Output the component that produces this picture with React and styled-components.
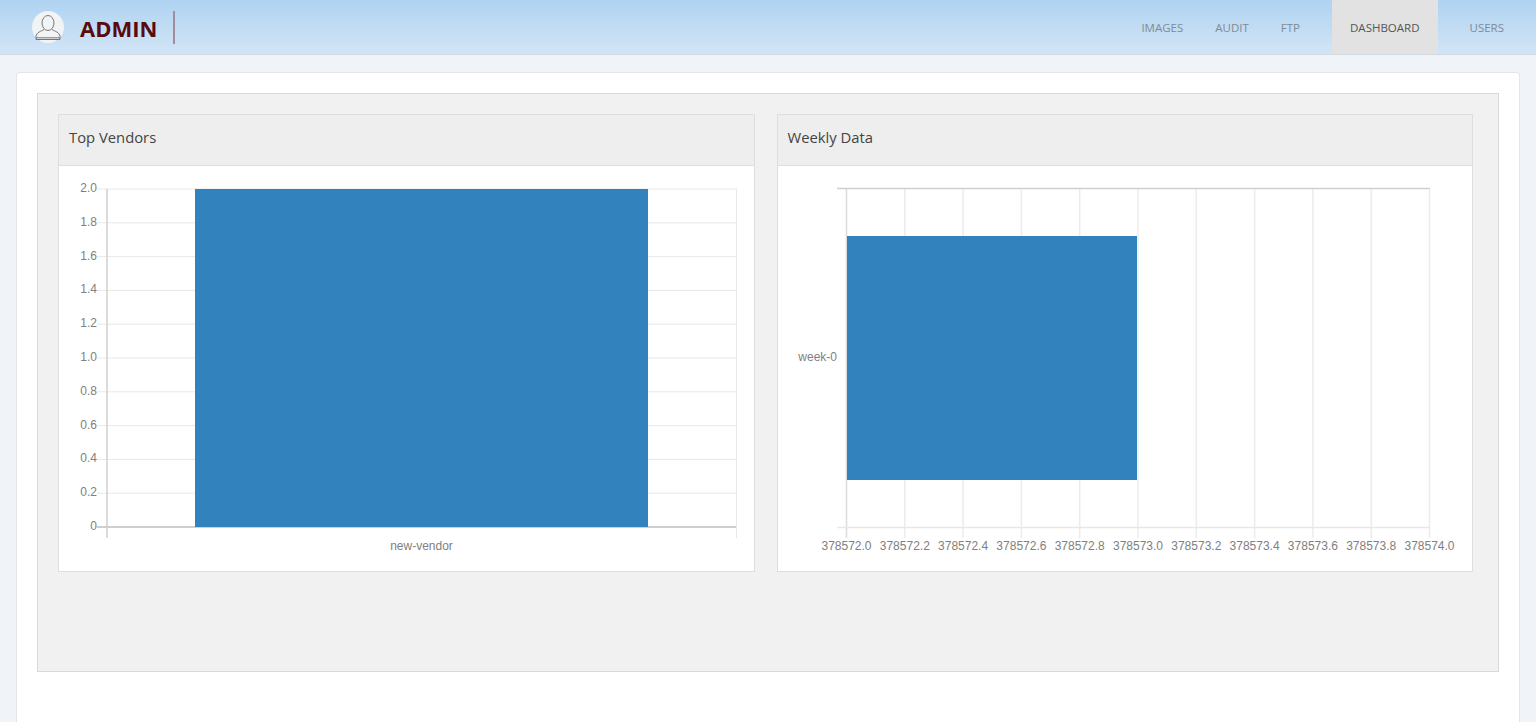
import React from 'react';
import styled, { createGlobalStyle } from 'styled-components';

const navItems = [
  { label: 'IMAGES', left: 16, right: 16 },
  { label: 'AUDIT', left: 16, right: 16 },
  { label: 'FTP', left: 16, right: 32 },
  { label: 'DASHBOARD', left: 18, right: 18, isActive: true },
  { label: 'USERS', left: 32, right: 32 },
];

const barColor = '#3182bd';
const gridColor = '#e8e8e8';
const axisColor = '#cfcfcf';

const vendorTicks = ['2.0', '1.8', '1.6', '1.4', '1.2', '1.0', '0.8', '0.6', '0.4', '0.2', '0'];
const weeklyTicks = ['378572.0', '378572.2', '378572.4', '378572.6', '378572.8', '378573.0', '378573.2', '378573.4', '378573.6', '378573.8', '378574.0'];

const GlobalStyle = createGlobalStyle`
  html, body {
    margin: 0;
    height: 100%;
    overflow: hidden;
    background: #f0f4f8;
    font-family: "Open Sans", "Liberation Sans", sans-serif;
  }
`;

const Page = styled.div`
  height: 722px;
  display: flex;
  flex-direction: column;
`;

const Header = styled.header`
  height: 54px;
  flex: none;
  display: flex;
  justify-content: space-between;
  background: linear-gradient(to bottom, #afd3f1, #d2e5f6);
  border-bottom: 1px solid #d0dae2;
`;

const Brand = styled.div`
  display: flex;
  align-items: center;
  padding-left: 32px;
`;

const Avatar = styled.div`
  width: 32px;
  height: 32px;
  border-radius: 50%;
  background: #f1f3f4;
  display: flex;
  align-items: center;
  justify-content: center;
`;

const BrandName = styled.div`
  margin-left: 16px;
  padding-right: 16px;
  height: 33px;
  line-height: 35px;
  border-right: 2px solid #a08c9a;
  color: #5a0a0e;
  font-size: 22px;
  font-weight: 700;
`;

const Nav = styled.nav`
  display: flex;
`;

const NavItem = styled.a`
  display: flex;
  align-items: center;
  height: 54px;
  padding: 0 ${(p) => p.$right}px 0 ${(p) => p.$left}px;
  font-size: 11.5px;
  color: ${(p) => (p.$isActive ? '#555' : '#7f8b96')};
  background: ${(p) => (p.$isActive ? '#e2e2e2' : 'transparent')};
`;

const Main = styled.main`
  flex: 1;
  padding: 17px 16px 0 16px;
  display: flex;
`;

const Card = styled.div`
  flex: 1;
  background: #fff;
  border: 1px solid #e3e6e9;
  border-bottom: none;
  border-radius: 4px 4px 0 0;
  padding: 20px 20px 0;
`;

const Well = styled.div`
  height: 537px;
  background: #f1f1f1;
  border: 1px solid #d9d9d9;
  padding: 20px;
  display: flex;
  gap: 22px;
`;

const Panel = styled.section`
  width: 696.5px;
  height: 458px;
  box-sizing: border-box;
  background: #fff;
  border: 1px solid #dedede;
`;

const PanelTitle = styled.div`
  height: 51px;
  box-sizing: border-box;
  padding-left: 10px;
  line-height: 44px;
  background: #eee;
  border-bottom: 1px solid #dedede;
  font-size: 14.8px;
  color: #444;
`;

const ChartSvg = styled.svg`
  display: block;
  width: 694.5px;
  height: 405px;
`;

const TickLabel = styled.text`
  font-family: "Liberation Sans", Arial, sans-serif;
  font-size: 12px;
  fill: #808080;
`;

const UserIcon = () => (
  <svg width="26" height="27" viewBox="0 0 26 27" fill="none" stroke="#777" strokeWidth="1">
    <ellipse cx="13" cy="9" rx="6" ry="7.5" />
    <path d="M9 15.5C6 17.5 1.5 18 1 22.5V25.5H25V22.5C24.5 18 20 17.5 17 15.5" />
    <path d="M1 23.8H25" />
  </svg>
);

const TopVendorsChart = () => (
  <ChartSvg viewBox="59 166 694.5 405">
    {vendorTicks.map((tick, i) => {
      const y = 189 + i * 33.8;
      return (
        <g key={tick}>
          <line x1="97" x2="737" y1={y} y2={y} stroke={i === 10 ? axisColor : gridColor} strokeWidth={i === 10 ? 2 : 1} />
          <TickLabel x="97" y={y + 3} textAnchor="end">{tick}</TickLabel>
        </g>
      );
    })}
    <line x1="107" x2="107" y1="189" y2="538" stroke={axisColor} strokeWidth="1.5" />
    <line x1="736.5" x2="736.5" y1="189" y2="538" stroke={gridColor} />
    <rect x="195" y="189" width="453" height="338" fill={barColor} />
    <TickLabel x="421.5" y="550" textAnchor="middle">new-vendor</TickLabel>
  </ChartSvg>
);

const WeeklyDataChart = () => (
  <ChartSvg viewBox="778 166 694.5 405">
    {weeklyTicks.map((tick, i) => {
      const x = 846.5 + i * 58.3;
      return (
        <g key={tick}>
          <line x1={x} x2={x} y1="189" y2="538" stroke={i === 0 ? '#dcdcdc' : '#ececec'} strokeWidth="1.5" />
          <TickLabel x={x} y="550" textAnchor="middle">{tick}</TickLabel>
        </g>
      );
    })}
    <line x1="837" x2="1430" y1="188.5" y2="188.5" stroke={axisColor} strokeWidth="1.5" />
    <line x1="837" x2="1430" y1="527.5" y2="527.5" stroke={gridColor} strokeWidth="1.5" />
    <rect x="847" y="236" width="290" height="244" fill={barColor} />
    <TickLabel x="837" y="361" textAnchor="end">week-0</TickLabel>
  </ChartSvg>
);

const App = () => (
  <Page>
    <GlobalStyle />
    <Header>
      <Brand>
        <Avatar><UserIcon /></Avatar>
        <BrandName>ADMIN</BrandName>
      </Brand>
      <Nav>
        {navItems.map((item) => (
          <NavItem key={item.label} $left={item.left} $right={item.right} $isActive={item.isActive}>
            {item.label}
          </NavItem>
        ))}
      </Nav>
    </Header>
    <Main>
      <Card>
        <Well>
          <Panel>
            <PanelTitle>Top Vendors</PanelTitle>
            <TopVendorsChart />
          </Panel>
          <Panel>
            <PanelTitle>Weekly Data</PanelTitle>
            <WeeklyDataChart />
          </Panel>
        </Well>
      </Card>
    </Main>
  </Page>
);

export default App;
